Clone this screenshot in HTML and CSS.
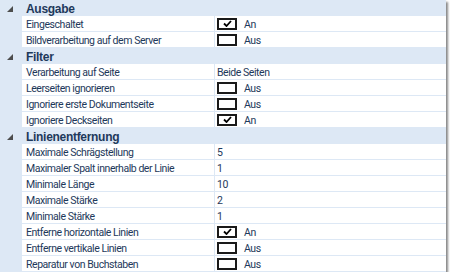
FILE: index.html
```html
<!DOCTYPE html>
<html lang="de">
<head>
    <meta charset="UTF-8">
    <title>Eigenschaften</title>
    <link rel="stylesheet" href="styles.css">
</head>
<body>
    <div class="grid">
        <!-- Ausgabe -->
        <div class="group">
            <span class="toggle"><svg width="6" height="6" viewBox="0 0 6 6"><polygon points="6,0 6,6 0,6" fill="#4d4d4d"/></svg></span>
            <span class="group-title">Ausgabe</span>
        </div>
        <div class="row">
            <span class="gutter"></span>
            <span class="name">Eingeschaltet</span>
            <span class="value"><span class="check on"><svg width="9" height="7" viewBox="0 0 9 7"><polyline points="1,3.5 3.5,6 8,1" fill="none" stroke="#000" stroke-width="1.8"/></svg></span>An</span>
        </div>
        <div class="row">
            <span class="gutter"></span>
            <span class="name">Bildverarbeitung auf dem Server</span>
            <span class="value"><span class="check"></span>Aus</span>
        </div>

        <!-- Filter -->
        <div class="group">
            <span class="toggle"><svg width="6" height="6" viewBox="0 0 6 6"><polygon points="6,0 6,6 0,6" fill="#4d4d4d"/></svg></span>
            <span class="group-title">Filter</span>
        </div>
        <div class="row">
            <span class="gutter"></span>
            <span class="name">Verarbeitung auf Seite</span>
            <span class="value">Beide Seiten</span>
        </div>
        <div class="row">
            <span class="gutter"></span>
            <span class="name">Leerseiten ignorieren</span>
            <span class="value"><span class="check"></span>Aus</span>
        </div>
        <div class="row">
            <span class="gutter"></span>
            <span class="name">Ignoriere erste Dokumentseite</span>
            <span class="value"><span class="check"></span>Aus</span>
        </div>
        <div class="row">
            <span class="gutter"></span>
            <span class="name">Ignoriere Deckseiten</span>
            <span class="value"><span class="check on"><svg width="9" height="7" viewBox="0 0 9 7"><polyline points="1,3.5 3.5,6 8,1" fill="none" stroke="#000" stroke-width="1.8"/></svg></span>An</span>
        </div>

        <!-- Linienentfernung -->
        <div class="group">
            <span class="toggle"><svg width="6" height="6" viewBox="0 0 6 6"><polygon points="6,0 6,6 0,6" fill="#4d4d4d"/></svg></span>
            <span class="group-title">Linienentfernung</span>
        </div>
        <div class="row">
            <span class="gutter"></span>
            <span class="name">Maximale Schrägstellung</span>
            <span class="value">5</span>
        </div>
        <div class="row">
            <span class="gutter"></span>
            <span class="name">Maximaler Spalt innerhalb der Linie</span>
            <span class="value">1</span>
        </div>
        <div class="row">
            <span class="gutter"></span>
            <span class="name">Minimale Länge</span>
            <span class="value">10</span>
        </div>
        <div class="row">
            <span class="gutter"></span>
            <span class="name">Maximale Stärke</span>
            <span class="value">2</span>
        </div>
        <div class="row">
            <span class="gutter"></span>
            <span class="name">Minimale Stärke</span>
            <span class="value">1</span>
        </div>
        <div class="row">
            <span class="gutter"></span>
            <span class="name">Entferne horizontale Linien</span>
            <span class="value"><span class="check on"><svg width="9" height="7" viewBox="0 0 9 7"><polyline points="1,3.5 3.5,6 8,1" fill="none" stroke="#000" stroke-width="1.8"/></svg></span>An</span>
        </div>
        <div class="row">
            <span class="gutter"></span>
            <span class="name">Entferne vertikale Linien</span>
            <span class="value"><span class="check"></span>Aus</span>
        </div>
        <div class="row">
            <span class="gutter"></span>
            <span class="name">Reparatur von Buchstaben</span>
            <span class="value"><span class="check"></span>Aus</span>
        </div>
    </div>
</body>
</html>
```

FILE: styles.css
```css
/* General */
body {
    margin: 0;
    background: #fff;
    font-family: Roboto, "Liberation Sans", sans-serif;
    font-size: 10.5px;
    letter-spacing: -0.45px;
    color: #1e395b;
}

.grid {
    width: 446px;
    background: #fff;
    box-shadow: 2px 2px 2px #8a8a8a;
}

/* Group header rows */
.group {
    display: flex;
    align-items: center;
    height: 16px;
    padding-top: 2px;
    box-sizing: border-box;
    background: #dde8f5;
}

.toggle {
    display: flex;
    width: 26px;
    padding-left: 7px;
    box-sizing: border-box;
}

.group-title {
    font-family: "Liberation Sans", sans-serif;
    font-weight: bold;
    font-size: 12px;
    letter-spacing: -0.3px;
}

/* Property rows */
.row {
    display: grid;
    grid-template-columns: 22px 193px 1fr;
    height: 16px;
}

.gutter {
    background: #dde8f5;
}

.name, .value {
    display: flex;
    align-items: center;
    padding-top: 2px;
    border-bottom: 1px solid #dde8f5;
    line-height: 13px;
    white-space: nowrap;
    overflow: hidden;
}

.name {
    padding-left: 4px;
    border-right: 1px solid #dde8f5;
}

.value {
    padding-left: 2px;
}

/* Checkbox */
.check {
    display: flex;
    align-items: center;
    justify-content: center;
    width: 20px;
    height: 12px;
    box-sizing: border-box;
    border: 2px solid #1a1a1a;
    background: #fff;
    margin-right: 7px;
    margin-top: -2px;
}
```
